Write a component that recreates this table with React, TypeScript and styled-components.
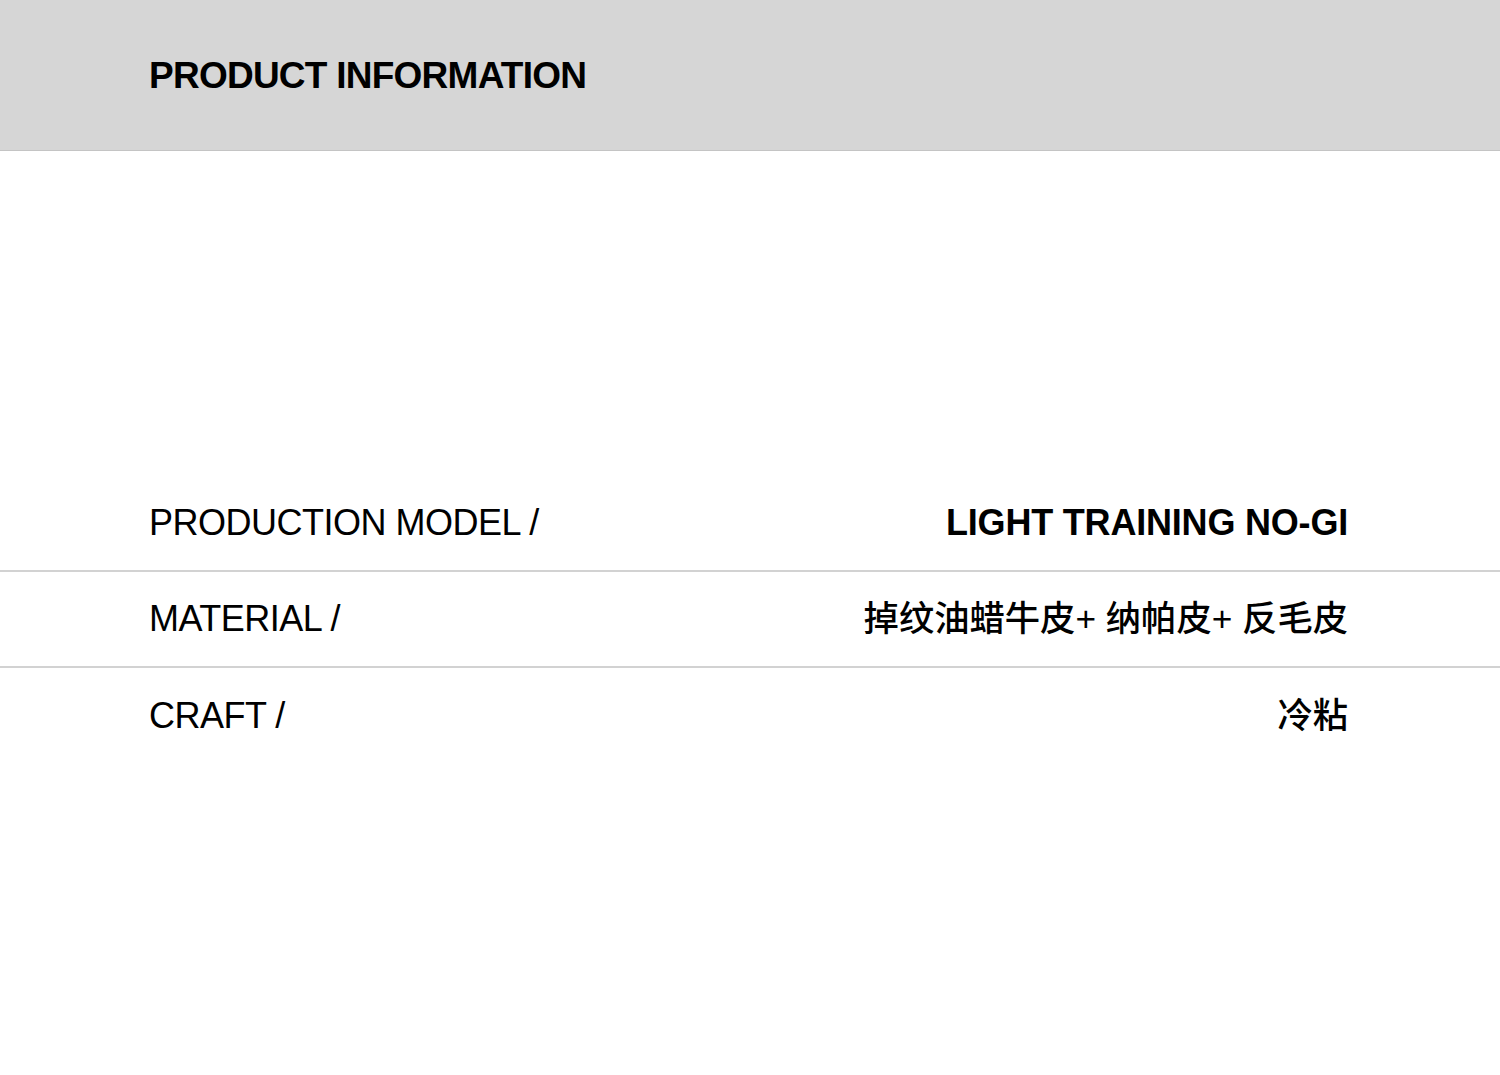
import styled, { createGlobalStyle } from "styled-components";

const GlobalStyle = createGlobalStyle`
  html, body {
    margin: 0;
    padding: 0;
    background: #fff;
  }
  body {
    font-family: "Liberation Sans", Arial, "Noto Sans CJK SC", sans-serif;
    color: #000;
  }
`;

const Page = styled.div`
  width: 1500px;
  min-height: 1075px;
  background: #fff;
  display: flex;
  flex-direction: column;
`;

const Header = styled.header`
  height: 151px;
  background: #d6d6d6;
  border-bottom: 1px solid #c4c4c4;
  padding: 56px 0 0 149px;
  box-sizing: border-box;
`;

const Title = styled.h1`
  margin: 0;
  font-size: 37px;
  font-weight: 700;
  letter-spacing: -0.75px;
  line-height: 40px;
`;

const Table = styled.section`
  margin-top: 325px;
  display: flex;
  flex-direction: column;
`;

const Row = styled.div<{ $divider?: boolean }>`
  height: 96px;
  box-sizing: border-box;
  padding: 0 152px 0 149px;
  display: flex;
  align-items: center;
  justify-content: space-between;
  border-bottom: ${(p) => (p.$divider ? "2px solid #d2d2d2" : "none")};
`;

const Label = styled.span`
  font-size: 36px;
  font-weight: 400;
  letter-spacing: -0.5px;
`;

const Value = styled.span<{ $bold?: boolean }>`
  font-size: ${(p) => (p.$bold ? "36px" : "35.3px")};
  font-weight: ${(p) => (p.$bold ? 700 : 500)};
  letter-spacing: ${(p) => (p.$bold ? "-0.2px" : "0")};
  padding-bottom: ${(p) => (p.$bold ? "0" : "7px")};
  font-family: "Liberation Sans", Arial, "Noto Sans CJK SC", sans-serif;
`;

const rows = [
  { label: "PRODUCTION MODEL /", value: "LIGHT TRAINING NO-GI", bold: true },
  { label: "MATERIAL /", value: "掉纹油蜡牛皮+ 纳帕皮+ 反毛皮", bold: false },
  { label: "CRAFT /", value: "冷粘", bold: false },
];

export default function App() {
  return (
    <Page>
      <GlobalStyle />
      <Header>
        <Title>PRODUCT INFORMATION</Title>
      </Header>
      <Table>
        {rows.map((r, i) => (
          <Row key={r.label} $divider={i < rows.length - 1}>
            <Label>{r.label}</Label>
            <Value $bold={r.bold}>{r.value}</Value>
          </Row>
        ))}
      </Table>
    </Page>
  );
}
